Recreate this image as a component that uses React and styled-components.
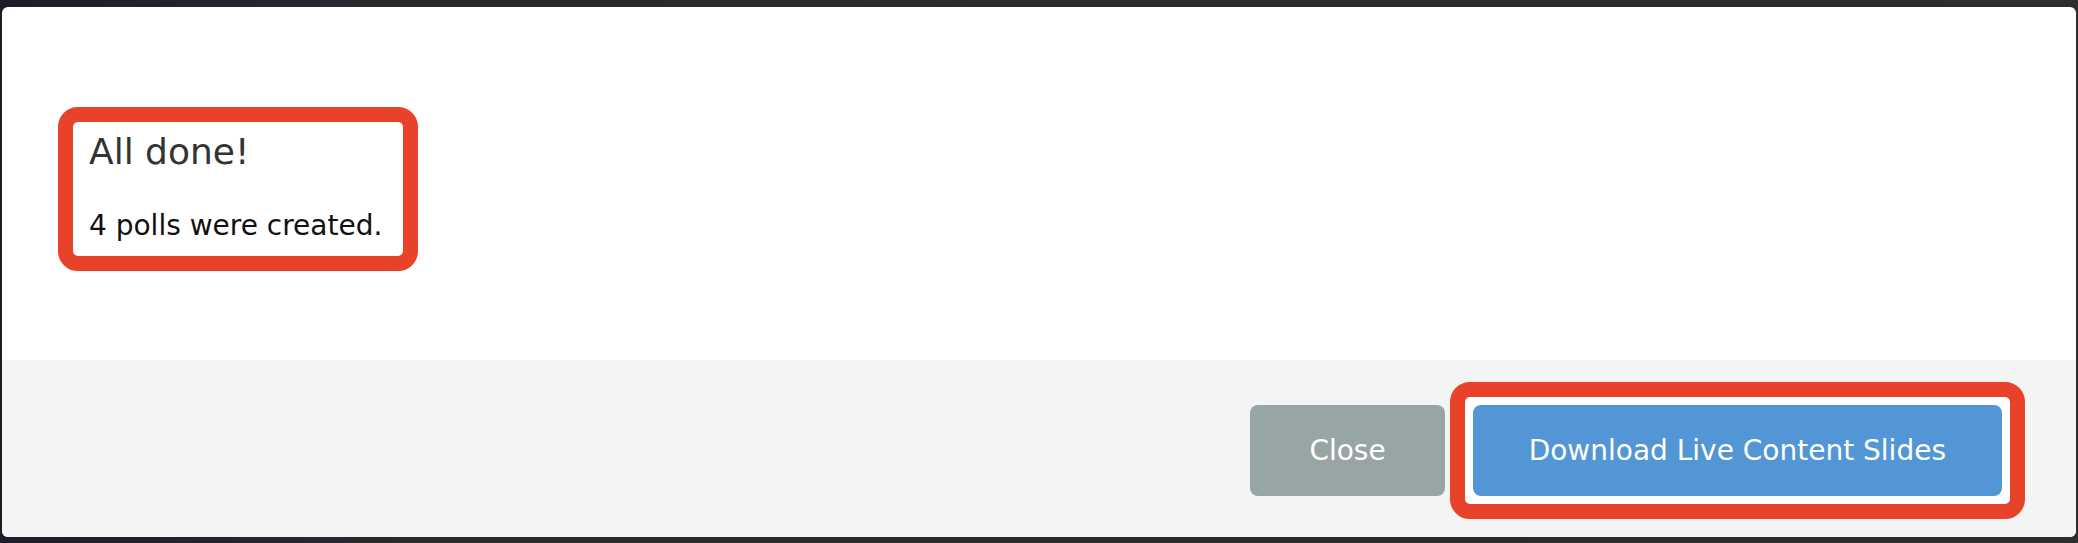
import styled, {createGlobalStyle} from 'styled-components';

const GlobalStyle = createGlobalStyle`
html, body {
  margin: 0;
  padding: 0;
  height: 543px;
  overflow: hidden;
  background: linear-gradient(90deg, #1d1d2a 0%, #2a2a2e 20%, #2d2d2d 100%);
  font-family: "DejaVu Sans", "Liberation Sans", sans-serif;
}
`

const Page = styled.div`
padding: 7px 2px 6px 2px;
`

const Dialog = styled.div`
height: 530px;
background: #ffffff;
border-radius: 6px;
overflow: hidden;
display: flex;
flex-direction: column;
`

const Body = styled.div`
height: 353px;
box-sizing: border-box;
padding: 100px 0 0 56px;
`

// red annotation frame drawn round a part of the dialog
const Highlight = styled.div`
display: inline-flex;
flex-direction: column;
align-items: flex-start;
border: 15px solid #e8432a;
border-radius: 20px;
background: #ffffff;
padding: ${(p) => p.$pad};
`

const Title = styled.h2`
margin: 0;
font-size: 36px;
line-height: 40px;
font-weight: 400;
color: #333333;
`

const Message = styled.p`
margin: 38px 0 0 0;
font-size: 28px;
line-height: 32px;
color: #111111;
`

const Footer = styled.div`
height: 177px;
box-sizing: border-box;
background: #f4f4f4;
padding: 4px 51px 0 0;
display: flex;
justify-content: flex-end;
align-items: center;
gap: 5px;
`

const Button = styled.button`
height: 91px;
padding: 0 ${(p) => p.$side}px;
border: none;
border-radius: 8px;
background: ${(p) => p.$color};
color: #ffffff;
font-family: "DejaVu Sans", "Liberation Sans", sans-serif;
font-size: 28px;
cursor: pointer;
`

function App() {
    return (
    <Page>
        <GlobalStyle />
        <Dialog>
            <Body>
                <Highlight $pad="10px 21px 14px 16px">
                    <Title>All done!</Title>
                    <Message>4 polls were created.</Message>
                </Highlight>
            </Body>
            <Footer>
                <Button $color="#98a5a5" $side={59}>Close</Button>
                <Highlight $pad="8px">
                    <Button $color="#5296d5" $side={56}>Download Live Content Slides</Button>
                </Highlight>
            </Footer>
        </Dialog>
    </Page>
    )
}
export default App;
